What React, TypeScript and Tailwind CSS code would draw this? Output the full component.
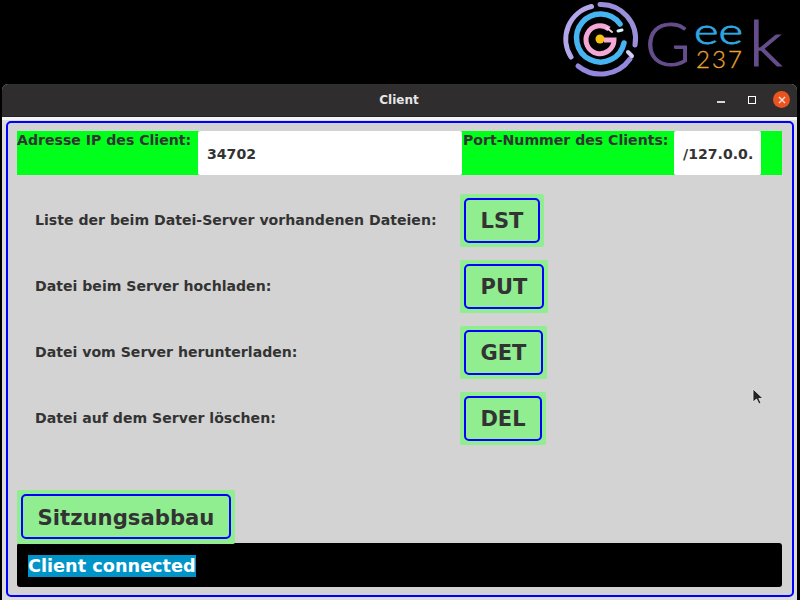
const font = { fontFamily: '"DejaVu Sans", sans-serif' };

function Logo() {
  return (
    <svg width="240" height="84" viewBox="560 0 240 84" fill="none">
      <g strokeLinecap="round" fill="none">
        <path d="M 591.5 6.5 A 33.5 33.5 0 0 0 571 57" stroke="#b3a6ea" strokeWidth="5" />
        <path d="M 600 4.5 A 34.5 34.5 0 0 1 635 45" stroke="#9a90da" strokeWidth="5" />
        <path d="M 630 59 A 36 36 0 0 1 578 66" stroke="#9488de" strokeWidth="5" />
        <path d="M 628 52 L 632 56" stroke="#d2cef2" strokeWidth="4" />
        <path d="M 620 24 A 24 24 0 1 0 624 43" stroke="#45b4f0" strokeWidth="5.5" />
        <path d="M 618 31 L 622 30" stroke="#d9f2ff" strokeWidth="3" />
        <path d="M 609 29 A 14 14 0 1 0 614 40 L 604 40" stroke="#f4a8d8" strokeWidth="5" strokeLinecap="butt" />
        <path d="M 607 28 L 612 32" stroke="#f6d3ec" strokeWidth="2" />
      </g>
      <circle cx="600" cy="39" r="4.5" fill="#f8bf10" />
      <g style={{ fontFamily: 'Lato, sans-serif', fontWeight: 300 }}>
        <text x="645" y="66" fontSize="62" fill="#664e8d" stroke="#664e8d" strokeWidth="1">G</text>
        <text x="694" y="44" fontSize="36" fill="#2ea8e2" stroke="#2ea8e2" strokeWidth="0.8" textLength="49" lengthAdjust="spacingAndGlyphs">ee</text>
        <text x="696" y="68" fontSize="24" fill="#e8a234" textLength="46" stroke="#e8a234" strokeWidth="0.3">237</text>
        <text x="749" y="66" fontSize="64" fill="#664e8d" stroke="#664e8d" strokeWidth="1.2" textLength="33" lengthAdjust="spacingAndGlyphs">k</text>
      </g>
    </svg>
  );
}

function Row({ label, btn, w }: { label: string; btn: string; w: string }) {
  return (
    <div className="flex items-center h-[54px] mb-3">
      <div className="w-[443px] pl-[18px] pt-[2px] text-[14.1px] font-bold text-[#333333] shrink-0">{label}</div>
      <div className={`bg-[#90ee90] rounded-[2px] p-1 ${w}`}>
        <div className="h-[45px] border-2 border-[#0000ff] rounded-[5px] pt-[3px] flex items-center justify-center text-[21px] font-bold text-[#333333]">
          {btn}
        </div>
      </div>
    </div>
  );
}

export default function App() {
  return (
    <div className="relative w-[800px] h-[600px] overflow-hidden bg-black" style={font}>
      <div className="h-[84px] flex justify-end">
        <Logo />
      </div>
      <div className="ml-[2px] mr-[3px] h-[516px] bg-[#dcdcdc] rounded-t-[6px] overflow-hidden flex flex-col">
        <div className="h-[33px] shrink-0 bg-[#2f2d2d] relative flex items-center justify-center border-b border-[#252424]">
          <span className="text-[12px] font-bold text-[#e6e6e6] ml-[-1px]">Client</span>
          <div className="absolute right-[7px] top-[7px] flex items-center">
            <div className="w-[8px] h-[2px] bg-[#d8d8d8] mt-[5px] mr-[23px]" />
            <div className="w-[8px] h-[8px] border border-white mr-[17px]" />
            <div className="w-[17px] h-[17px] rounded-full bg-[#e95420] flex items-center justify-center">
              <svg width="10" height="10" viewBox="0 0 10 10"><path d="M2 2 L8 8 M8 2 L2 8" stroke="#f8e0d8" strokeWidth="1.4" /></svg>
            </div>
          </div>
        </div>
        <div className="h-[3px] shrink-0 bg-[#f4f4f4]" />
        <div className="ml-[4px] mr-[3px] mt-[1px] h-[476px] border-2 border-[#0000ff] rounded-[5px] bg-[#d3d3d3] pt-[8px] px-[9px] flex flex-col">
          <div className="h-[44px] shrink-0 w-[765px] bg-[#00ff1a] flex text-[#333333] font-bold text-[14.1px]">
            <div className="w-[181px] pt-[1px] whitespace-nowrap leading-[17px]">Adresse IP des Client:</div>
            <div className="w-[264px] bg-white rounded-[2px] pl-[9px] pt-[3px] flex items-center">34702</div>
            <div className="w-[212px] pl-[1px] pt-[1px] whitespace-nowrap leading-[17px]">Port-Nummer des Clients:</div>
            <div className="w-[87px] bg-white rounded-[2px] pl-[9px] pt-[3px] flex items-center overflow-hidden whitespace-nowrap">/127.0.0.</div>
          </div>
          <div className="mt-[18px] flex flex-col">
            <Row label="Liste der beim Datei-Server vorhandenen Dateien:" btn="LST" w="w-[84px]" />
            <Row label="Datei beim Server hochladen:" btn="PUT" w="w-[88px]" />
            <Row label="Datei vom Server herunterladen:" btn="GET" w="w-[87px]" />
            <Row label="Datei auf dem Server löschen:" btn="DEL" w="w-[86px]" />
          </div>
          <div className="mt-[33px] w-[218px] h-[54px] shrink-0 bg-[#90ee90] rounded-[2px] p-1 relative z-10">
            <div className="h-[45px] border-2 border-[#0000ff] rounded-[5px] pt-[2px] flex items-center justify-center text-[21.2px] font-bold text-[#333333]">
              Sitzungsabbau
            </div>
          </div>
          <div className="mt-[-1px] w-[765px] h-[44px] shrink-0 bg-black rounded-[3px] pl-[11px] pt-[2px] flex items-center">
            <span className="bg-[#0095c8] text-white font-bold text-[17.7px] leading-[22px]">Client connected</span>
          </div>
        </div>
      </div>
      <svg className="absolute left-[752px] top-[388px]" width="12" height="18" viewBox="0 0 12 18">
        <path d="M1 1 L1 14 L4.5 11 L7 16 L9 15 L6.8 10.5 L11 10.5 Z" fill="#222" stroke="#eee" strokeWidth="0.8" />
      </svg>
    </div>
  );
}
